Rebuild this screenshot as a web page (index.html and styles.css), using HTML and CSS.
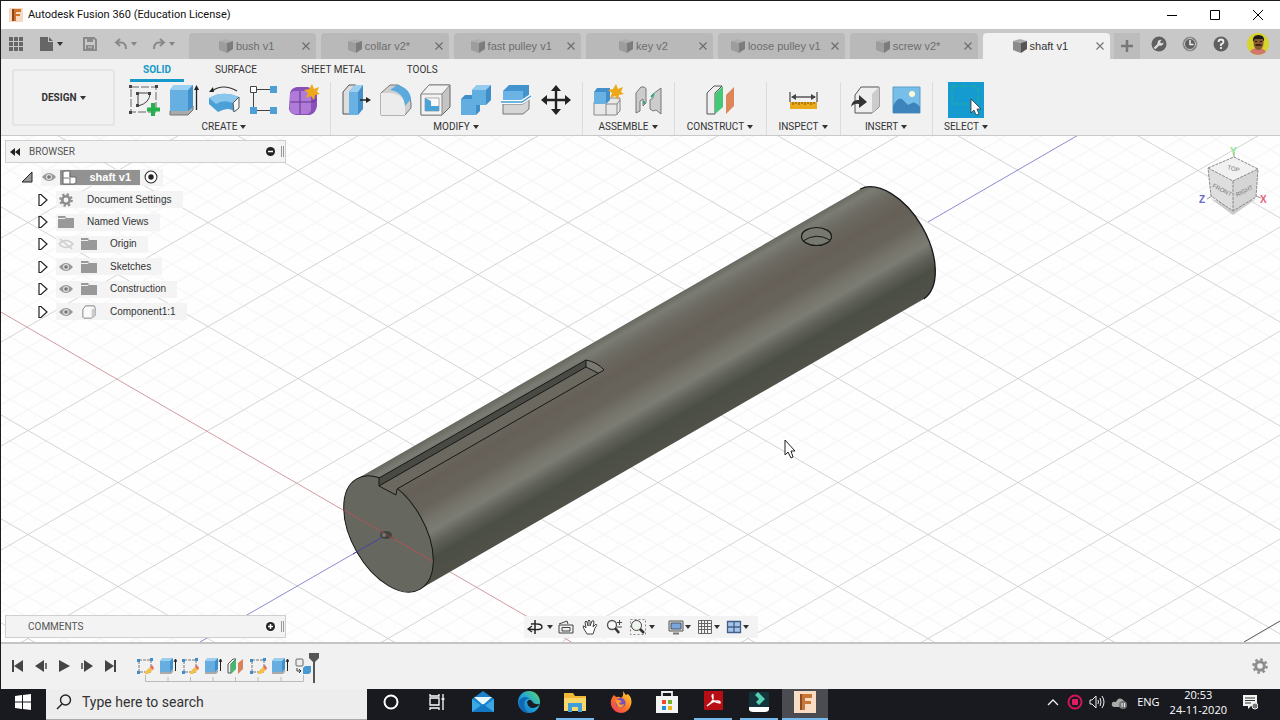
FILE: index.html
```html
<!DOCTYPE html>
<html lang="en">
<head>
<meta charset="utf-8">
<title>Autodesk Fusion 360 (Education License)</title>
<link rel="stylesheet" href="styles.css">
</head>
<body>
<svg class="defs" aria-hidden="true">
  <defs>
    <linearGradient id="edge" x1="0" y1="1" x2="1" y2="0"><stop offset="0" stop-color="#1565c0"/><stop offset=".5" stop-color="#1fa6d8"/><stop offset="1" stop-color="#63d86a"/></linearGradient>
    <linearGradient id="fire" x1="0" y1="1" x2="1" y2="0"><stop offset="0" stop-color="#f02f63"/><stop offset=".5" stop-color="#ff7a22"/><stop offset="1" stop-color="#ffe23c"/></linearGradient>
    <symbol id="cube" viewBox="0 0 16 16"><path d="M1 3 8 1 15 3 9 5Z" fill="#aaa"/><path d="M1 3 9 5V15L1 12Z" fill="#8c8c8c"/><path d="M9 5 15 3V11L9 15Z" fill="#555"/></symbol>
    <symbol id="close" viewBox="0 0 10 10"><path d="M1.500 1.500 8.500 8.500M8.500 1.500 1.500 8.500" stroke="currentColor" stroke-width="1.200" fill="none"/></symbol>
    <symbol id="folder" viewBox="0 0 16 14"><path d="M0 1H7L9 3H16V13H0Z" fill="#999"/><path d="M0 3.500H7L8.500 2" stroke="#eee" fill="none"/></symbol>
    <symbol id="eye" viewBox="0 0 16 12"><path d="M1 6Q8-2 15 6Q8 14 1 6Z" fill="#999"/><circle cx="8" cy="6" r="3" fill="#ddd"/><circle cx="8" cy="6" r="1.800" fill="#777"/></symbol>
    <symbol id="gear" viewBox="0 0 16 16"><circle cx="8" cy="8" r="4.300" fill="none" stroke="#8d8d8d" stroke-width="3"/><circle cx="8" cy="8" r="6.600" fill="none" stroke="#8d8d8d" stroke-width="2.400" stroke-dasharray="2.600 2.580"/></symbol>
    <symbol id="twist" viewBox="0 0 10 14"><path d="M1 1.500H3L9 7 3 12.500H1Z" fill="#fff" stroke="#222" stroke-width="1.200"/></symbol>
    <symbol id="sketch" viewBox="0 0 18 18"><path d="M3 3H15V15H3Z" fill="none" stroke="#777" stroke-dasharray="3 1"/><path d="M1 2h3v3H1zM14 1h3v3h-3zM1 14h3v3H1z" fill="#3c8dcc"/><path d="m9 15 5-5 3 3-5 4H9z" fill="#f3c04a"/><path d="m14 10 2-2 2 3-1 2z" fill="#e26b64"/></symbol>
    <symbol id="extrude" viewBox="0 0 18 18"><path d="M1 14H12L14 12V15L12 17H1Z" fill="#aaa"/><path d="M1 4 4 1H14V12L11 15H1Z" fill="#3f90ca"/><path d="M1 4H11V15H1Z" fill="#67aee0"/><path d="M1 4 4 1H14L11 4Z" fill="#9bcff0"/><path d="M16.500 14V3M15 5l1.500-3L18 5" stroke="#222" fill="none"/></symbol>
    <symbol id="planes" viewBox="0 0 18 18"><path d="M2 7 7 2H10L5 7V16H2Z" fill="#eee" stroke="#555"/><path d="M5 7 10 2V12L5 17Z" fill="#43b96d"/><path d="M12 6 17 2V12L12 17Z" fill="#d98259"/></symbol>
  </defs>
</svg>

<div class="app">
  <header class="titlebar">
    <svg class="logo" viewBox="0 0 14 14"><path d="M0 0H14V14H0Z" fill="#f6d9c0"/><path d="M3 1H12V4H7V6H11V8H7V13H3Z" fill="#d0712c"/><path d="M3 1H5V13H3Z" fill="#8f421c"/></svg>
    <h1>Autodesk Fusion 360 (Education License)</h1>
    <div class="window-controls">
      <button aria-label="Minimize"><svg viewBox="0 0 10 10"><path d="M0 5.500H10" stroke="#000"/></svg></button>
      <button aria-label="Maximize"><svg viewBox="0 0 10 10"><path d="M.5.5H9.500V9.500H.5Z" fill="none" stroke="#000"/></svg></button>
      <button aria-label="Close"><svg viewBox="0 0 10 10"><path d="M0 0 10 10M10 0 0 10" stroke="#000"/></svg></button>
    </div>
  </header>

  <div class="docbar">
    <div class="quick">
      <button aria-label="Data panel"><svg width="14" height="14" viewBox="0 0 14 14"><path d="M0 0h4v4H0zM5 0h4v4H5zM10 0h4v4h-4zM0 5h4v4H0zM5 5h4v4H5zM10 5h4v4h-4zM0 10h4v4H0zM5 10h4v4H5zM10 10h4v4h-4z" fill="#666"/></svg></button>
      <button class="caret wide" aria-label="File"><svg width="14" height="16" viewBox="0 0 14 16"><path d="M0 1H8V6H13V15H0ZM9 1 13 5H9Z" fill="#666"/></svg></button>
      <button class="save" aria-label="Save"><svg width="14" height="14" viewBox="0 0 14 14"><path d="M1 1H11L13 3V13H1Z" fill="none" stroke="#8a8a8a" stroke-width="2"/><path d="M4 1h6v4H4zM3 8h8v5H3z" fill="#8a8a8a"/><path d="M5 10h4" stroke="#ccc"/></svg></button>
      <button class="caret soft wide" aria-label="Undo"><svg width="14" height="14" viewBox="0 0 14 14"><path d="M6 2 2 5.500 6 9M2 5.500H7Q12 5.500 12 12" fill="none" stroke="#8a8a8a" stroke-width="2"/></svg></button>
      <button class="caret soft wide" aria-label="Redo"><svg width="14" height="14" viewBox="0 0 14 14"><path d="M8 2 12 5.500 8 9M12 5.500H7Q2 5.500 2 12" fill="none" stroke="#8a8a8a" stroke-width="2"/></svg></button>
    </div>
    <nav class="tabs" aria-label="Documents">
      <div class="tab"><button class="name"><svg><use href="#cube"/></svg>bush v1</button><button class="x" aria-label="Close bush"><svg><use href="#close"/></svg></button></div>
      <div class="tab"><button class="name"><svg><use href="#cube"/></svg>collar v2*</button><button class="x" aria-label="Close collar"><svg><use href="#close"/></svg></button></div>
      <div class="tab"><button class="name"><svg><use href="#cube"/></svg>fast pulley v1</button><button class="x" aria-label="Close fast pulley"><svg><use href="#close"/></svg></button></div>
      <div class="tab"><button class="name"><svg><use href="#cube"/></svg>key v2</button><button class="x" aria-label="Close key"><svg><use href="#close"/></svg></button></div>
      <div class="tab"><button class="name"><svg><use href="#cube"/></svg>loose pulley v1</button><button class="x" aria-label="Close loose pulley"><svg><use href="#close"/></svg></button></div>
      <div class="tab"><button class="name"><svg><use href="#cube"/></svg>screw v2*</button><button class="x" aria-label="Close screw"><svg><use href="#close"/></svg></button></div>
      <div class="tab active"><button class="name"><svg><use href="#cube"/></svg>shaft v1</button><button class="x" aria-label="Close shaft"><svg><use href="#close"/></svg></button></div>
    </nav>
    <button class="new" aria-label="New design"><svg width="12" height="12" viewBox="0 0 12 12"><path d="M6 0V12M0 6H12" stroke="#777" stroke-width="2.500"/></svg></button>
    <div class="account">
      <button aria-label="Extensions"><svg viewBox="0 0 16 16"><circle cx="8" cy="8" r="7.500" fill="#606060"/><path d="m3.500 12.500 5-5" stroke="#ddd" stroke-width="2.400"/><path d="M10.500 4A3 3 0 1 0 12.500 6.500L10.500 7.500 9 6Z" fill="#ddd"/></svg></button>
      <button aria-label="Job status"><svg viewBox="0 0 16 16"><circle cx="8" cy="8" r="7" fill="#606060" stroke="#999"/><circle cx="8" cy="8" r="5.500" fill="none" stroke="#ccc"/><path d="M8 4V8.500H11.500" stroke="#eee" stroke-width="1.500" fill="none"/></svg></button>
      <button aria-label="Help"><svg viewBox="0 0 16 16"><circle cx="8" cy="8" r="7.500" fill="#606060"/><path d="M5.500 6Q5.500 3.500 8 3.500T10.500 6Q10.500 7.500 8 8.300V10M8 11V13" stroke="#eee" stroke-width="1.800" fill="none"/></svg></button>
      <button class="avatar" aria-label="Profile"><svg viewBox="0 0 22 22"><circle cx="11" cy="11" r="11" fill="#d6d32c"/><path d="M3 19Q5 15 11 15T19 19Q11 25 3 19Z" fill="#d0786b"/><ellipse cx="11.500" cy="10" rx="5" ry="7" fill="#8a5733"/><path d="M6 9Q5 2 11.500 2T17 9L15.500 6H8Z" fill="#1d1a18"/><path d="M8.500 12H14.500" stroke="#21160e" stroke-width="1.500"/><path d="M8 8.500h2M13 8.500h2" stroke="#21160e"/></svg></button>
    </div>
  </div>

  <div class="ribbon">
    <button class="workspace caret">DESIGN</button>
    <div class="ribbon-main">
      <nav class="modes" aria-label="Toolbar tabs">
        <button class="on">SOLID</button><button>SURFACE</button><button>SHEET METAL</button><button>TOOLS</button>
      </nav>
      <div class="groups">
        <section class="group first">
          <div class="tools">
            <button aria-label="Create Sketch"><svg viewBox="0 0 32 32"><path d="M3 3H28V28H3Z" fill="none" stroke="#666" stroke-dasharray="8 2"/><path d="M1 1h3v3H1zM27 1h3v3h-3zM1 27h3v3H1zM8 8h3v3H8zM20 8h3v3h-3zM8 20h3v3H8z" fill="#444"/><path d="M10 10V21M10 9H22Q22 19 10 22" fill="none" stroke="#444"/><path d="M25 19V32M19 25.500H32" stroke="#23b14d" stroke-width="4"/></svg></button>
            <button aria-label="Extrude"><svg viewBox="0 0 32 32"><path d="M2 27 6 25 25 22V26L20 31H2Z" fill="#aaa" stroke="#777"/><path d="M2 6 6 1H25V23L20 27H2Z" fill="#3f91cd"/><path d="M2 6H20V27H2Z" fill="#65afe1"/><path d="M2 6 6 1H25L20 6Z" fill="#9ad0f1"/><path d="M28.500 26V4" stroke="#222" stroke-width="1.300"/><path d="m26 6 2.500-5L31 6Z" fill="#222"/></svg></button>
            <button aria-label="Revolve"><svg viewBox="0 0 32 32"><path d="M1 14Q15 6 31 13V24L26 28Q22 22 10 28L1 20Z" fill="#4ba0d8"/><path d="M1 14Q15 6 31 13L25 19Q15 15 8 20Z" fill="#8ac7ec"/><path d="M25 19 31 13V24L26 28Z" fill="#f6f6f6" stroke="#555"/><path d="M4 7Q15-1 29 7" fill="none" stroke="#333" stroke-width="1.200"/><path d="m1 8 4-5 1 5Z" fill="#222"/></svg></button>
            <button aria-label="Pattern"><svg viewBox="0 0 32 32"><path d="M9 5.500H24M5.500 9V24M9 26.500H24" stroke="#444"/><path d="M2.500 2.500h6v6h-6z" fill="#fff" stroke="#444"/><path d="M22 2h7v7h-7zM2 23h7v7H2zM22 23h7v7h-7z" fill="#4e9fd6"/></svg></button>
            <button aria-label="Create Form"><svg viewBox="0 0 32 32"><path d="M2 9Q3 4 9 3H20Q25 5 29 10V22Q28 29 22 31H8Q2 30 1 25Z" fill="#8950b8"/><path d="M2 10Q3 7 7 7H19Q23 8 23 12V26Q22 30 18 30H6Q2 29 2 25Z" fill="#b07ad9"/><path d="M12 7V30M2 18H23Q28 17 29 15" fill="none" stroke="#65348e"/><path d="m24 0 2 5 5-2-2 5 3 2-5 1-1 5-3-4-5 2 2-5-4-3 5-1Z" fill="#eda81c"/></svg></button>
          </div>
          <button class="caret label">CREATE</button>
        </section>
        <section class="group">
          <div class="tools">
            <button aria-label="Press Pull"><svg viewBox="0 0 32 32"><path d="M3 8 9 1H16V25L12 30H3Z" fill="#ddd" stroke="#555"/><path d="M9 8 15 1H23V25L18 31H9Z" fill="#458fc8"/><path d="M9 8H18V31H9Z" fill="#69b1e2"/><path d="M9 8 15 1H23L18 8Z" fill="#9bcff0"/><path d="M20 16H28" stroke="#222" stroke-width="1.500"/><path d="m26 13 5 3-5 3Z" fill="#222"/></svg></button>
            <button aria-label="Fillet"><svg viewBox="0 0 32 32"><path d="M1 9 10 1H18Q30 6 31 19V24L25 31H1Z" fill="#cfcfcf" stroke="#777"/><path d="M1 9H10Q24 10 25 22V31H1Z" fill="#ececec"/><path d="M10 6 17 1Q30 4 31 15L25 22Q24 8 10 6Z" fill="#5aaadd"/></svg></button>
            <button aria-label="Shell"><svg viewBox="0 0 32 32"><path d="M1 10 9 1H30V23L22 31H1Z" fill="#c4c4c4" stroke="#666"/><path d="M1 10H22V31H1ZM1 10 9 1H30L22 10" fill="#f2f2f2" stroke="#888"/><path d="M5 14H19V27H5Z" fill="#fafafa" stroke="#aaa"/><path d="M5 14 11 17V22L19 22V27H5Z" fill="#4aa2d9"/></svg></button>
            <button aria-label="Combine"><svg viewBox="0 0 32 32"><path d="M1 15 5 11H12V6L17 1H31V16L26 21H20V27L16 31H1Z" fill="#3e8ec8"/><path d="M1 15H12V6H26V21H16V31H1Z" fill="#63aee0"/><path d="m12 6 5-5h14l-5 5Z" fill="#94cbef"/></svg></button>
            <button aria-label="Split Body"><svg viewBox="0 0 32 32"><path d="M3 20H23L29 15V25L23 30H3Z" fill="#d6d6d6" stroke="#777"/><path d="M3 7 9 1H29V12L23 16H3Z" fill="#4393ce"/><path d="M3 7H23V16H3Z" fill="#6ab3e4"/><path d="M1 18H22L31 12" fill="none" stroke="#fff" stroke-width="4"/><path d="M1 18H22L31 12" fill="none" stroke="#459cd2" stroke-width="1.500"/></svg></button>
            <button aria-label="Move"><svg viewBox="0 0 32 32"><path d="M16 5V27M5 16H27" stroke="#222" stroke-width="2.400"/><path d="m11 7 5-6 5 6ZM11 25l5 6 5-6ZM7 11l-6 5 6 5ZM25 11l6 5-6 5Z" fill="#222"/></svg></button>
          </div>
          <button class="caret label">MODIFY</button>
        </section>
        <section class="group">
          <div class="tools">
            <button aria-label="New Component"><svg viewBox="0 0 32 32"><path d="M2 18H14L18 14H28V27L24 31H2Z" fill="#e8e8e8" stroke="#888"/><path d="M2 8 5 4H18V16L14 20H2Z" fill="#4190cb"/><path d="M2 8H14V20H2Z" fill="#68b1e2"/><path d="M14 20H25V31M14 20V31M25 20l3-4" fill="none" stroke="#888"/><path d="m24 0 2 5 5-2-2 5 3 2-5 1-1 5-3-4-5 2 2-5-4-3 5-1Z" fill="#eda81c"/></svg></button>
            <button aria-label="Joint"><svg viewBox="0 0 32 32"><path d="M4 9 9 3H12Q15 4 14 7V19L11 22V15L8 17V27L4 29Z" fill="#ccc" stroke="#777"/><path d="M29 4 21 10V14L18 16V25L21 27 24 26 29 30Z" fill="#ccc" stroke="#777"/><path d="M12 17V20M19 13 22 10" stroke="#35a887" stroke-width="2"/></svg></button>
          </div>
          <button class="caret label">ASSEMBLE</button>
        </section>
        <section class="group">
          <div class="tools single">
            <button aria-label="Offset Plane"><svg viewBox="0 0 32 32"><path d="M3 9 10 2H18L11 9V30H3Z" fill="#eee" stroke="#555"/><path d="M11 10 19 2V23L11 30Z" fill="#45c875"/><path d="M22 11 30 3V22L22 30Z" fill="#dc8659"/></svg></button>
          </div>
          <button class="caret label">CONSTRUCT</button>
        </section>
        <section class="group">
          <div class="tools narrow">
            <button aria-label="Measure"><svg viewBox="0 0 32 32"><path d="M3 8V18M30 8V18M5 13H28" stroke="#555" stroke-width="1.300"/><path d="m4 13 5-3v6ZM29 13l-5-3v6Z" fill="#444"/><path d="M3 18H30V25H3Z" fill="#eba91c"/><path d="M6 18v3m3-3v2m3-2v3m3-3v2m3-2v3m3-3v2m3-2v3m3-3v2" stroke="#795006"/></svg></button>
          </div>
          <button class="caret label">INSPECT</button>
        </section>
        <section class="group">
          <div class="tools">
            <button aria-label="Insert Derive"><svg viewBox="0 0 32 32"><path d="M5 11 11 3H29V23L22 29H5Z" fill="#eee" stroke="#555"/><path d="M22 10 29 3V23L22 29Z" fill="#ccc"/><path d="M1 23Q2 15 9 16V11L17 18 9 24V20Q4 19 1 23Z" fill="#333"/></svg></button>
            <button aria-label="Insert Image"><svg viewBox="0 0 32 32"><path d="M3 3H30V29H3Z" fill="#77bee9" stroke="#619dc2"/><path d="M3 22Q9 10 14 17L18 21 22 19Q25 17 30 23V29H3Z" fill="#3d84bc"/><circle cx="22" cy="10" r="3" fill="#fffbd4"/></svg></button>
          </div>
          <button class="caret label">INSERT</button>
        </section>
        <section class="group last">
          <div class="tools slim">
            <button class="picked" aria-label="Select"><svg viewBox="0 0 36 36"><path d="M4 4H30V22H4Z" fill="none" stroke="#23b28e" stroke-dasharray="6 3"/><path d="M23 17V31L26 28 28 33 31 32 29 27H33Z" fill="#fff" stroke="#333" stroke-width=".8"/></svg></button>
          </div>
          <button class="caret label">SELECT</button>
        </section>
      </div>
    </div>
  </div>

  <main class="viewport">
    <svg class="scene" viewBox="1 136 1279 506" preserveAspectRatio="xMidYMid slice" role="img" aria-label="Shaft model">
      <defs>
        <pattern id="grid" patternUnits="userSpaceOnUse" x="928" y="326.500" width="180" height="104">
          <g fill="none" stroke="#f2f2f2">
            <path d="M0 20.800 144 104M0 41.600 108 104M0 62.400 72 104M0 83.200 36 104M36 0 180 83.200M72 0 180 62.400M108 0 180 41.600M144 0 180 20.800"/>
            <path d="M0 83.200 144 0M0 62.400 108 0M0 41.600 72 0M0 20.800 36 0M36 104 180 20.800M72 104 180 41.600M108 104 180 62.400M144 104 180 83.200"/>
          </g>
        </pattern>
        <linearGradient id="steel" gradientUnits="userSpaceOnUse" x1="356.700" y1="479" x2="420.300" y2="589">
          <stop offset="0" stop-color="#66685f"/><stop offset=".06" stop-color="#7b7c74"/><stop offset=".16" stop-color="#6c6a62"/><stop offset=".3" stop-color="#655f57"/><stop offset=".46" stop-color="#68645c"/><stop offset=".58" stop-color="#77766d"/><stop offset=".65" stop-color="#7b7c73"/><stop offset=".74" stop-color="#60625a"/><stop offset=".84" stop-color="#4b4e45"/><stop offset="1" stop-color="#50524a"/>
        </linearGradient>
      </defs>
      <path d="M0 136H1280V642H0Z" fill="#fefefe"/>
      <path d="M0 136H1280V642H0Z" fill="url(#grid)"/>
      <path d="M0-521.700l1280 739.600M0-417.700l1280 739.600M0-313.700l1280 739.600M0-209.700l1280 739.600M0-105.700l1280 739.600M0-1.700l1280 739.600M0 102.300l1280 739.600M0 206.300l1280 739.600M0 414.300l1280 739.600M0 518.300l1280 739.600M0 622.300l1280 739.600M0 238.700l1280-739.600M0 342.700l1280-739.600M0 446.700l1280-739.600M0 550.700l1280-739.600M0 654.700l1280-739.600M0 862.700l1280-739.600M0 966.700l1280-739.600M0 1070.700l1280-739.600M0 1174.700l1280-739.600M0 1278.700l1280-739.600" fill="none" stroke="#cfcfcf" stroke-width=".9"/>
      <path d="M0 311.500 578 646" stroke="#d39aa2"/>
      <path d="M200 642 386 535M928 222 1080 134" stroke="#8b8bd0"/>
      <path d="M1244 642 1280 621" stroke="#555"/>
      <path d="M356.700 479 860.200 189A63.600 36.400 60 0 1 923.800 299L420.300 589Z" fill="url(#steel)"/>
      <path d="M860.200 189A63.600 36.400 60 0 1 923.800 299" fill="none" stroke="#171717" stroke-width="1.300"/>
      <ellipse cx="388.500" cy="534" rx="63.600" ry="36.400" transform="rotate(60 388.500 534)" fill="#66685f" stroke="#171717"/>
      <path d="M379 478 397 489 396 495 379 486Z" fill="#6b6860"/>
      <path d="M379 478 586 360 604 370 397 489 396 495 379 486Z" fill="#6b6860"/>
      <path d="M379 478 586 360V367L379 486Z" fill="#484a43"/>
      <path d="M586 360Q597 362 604 370L598 373 586 367Z" fill="#797970"/>
      <path d="M379 478 586 360Q597 362 604 370L397 489 396 495 379 486ZM379 486 586 367V360M586 367 598 373" fill="none" stroke="#181818"/>
      <ellipse cx="816.500" cy="236.500" rx="15" ry="9" fill="#77786e" stroke="#181818" stroke-width="1.200"/>
      <path d="M803 241Q816 232 830 240" fill="none" stroke="#181818"/>
      <path d="M344 510 433 561.500" stroke="#b05357"/>
      <path d="M353 554 386 535" stroke="#4444a3"/>
      <ellipse cx="386" cy="535" rx="6" ry="4" fill="#42443f"/><path d="M380 531l14 8" stroke="#8d4146"/><circle cx="384" cy="535" r="2" fill="#777"/>
      <g class="compass">
        <path d="M1211 199 1233 215 1256 199 1233 205Z" fill="#ccc"/>
        <path d="M1208 168 1234 157 1258 169 1233 181Z" fill="#f1f1f1"/><path d="M1208 168 1233 181V211L1211 196Z" fill="#dedede"/><path d="M1233 181 1258 169 1256 197 1233 211Z" fill="#d5d5d5"/>
        <path d="M1208 168 1233 181V211M1233 181 1258 169M1208 168 1234 157 1258 169 1256 197 1233 211 1211 196Z" fill="none" stroke="#888" stroke-dasharray="3 1"/>
        <path d="M1234 152V157M1207 199 1212 196M1256 196 1261 198" stroke="#999"/>
        <text x="1227" y="169" transform="rotate(15 1227 169)">TOP</text><text x="1212" y="187" transform="rotate(27 1212 187)">FRONT</text><text x="1237" y="197" transform="rotate(-27 1237 197)">RIGHT</text>
        <text class="axis y" x="1230" y="155">Y</text><text class="axis z" x="1199" y="203">Z</text><text class="axis x" x="1260" y="203">X</text>
      </g>
      <path d="M785 440V455L788 452 791 458 793 457 791 451H795Z" fill="#fff" stroke="#222"/>
    </svg>

    <aside class="browser">
      <header class="panel"><button aria-label="Collapse"><svg width="10" height="8" viewBox="0 0 10 8"><path d="M5 0V8L0 4ZM10 0V8L5 4Z" fill="#222"/></svg></button><h2>BROWSER</h2><button aria-label="Hide browser"><svg width="9" height="9" viewBox="0 0 9 9"><circle cx="4.500" cy="4.500" r="4.500" fill="#222"/><path d="M2 4.500H7" stroke="#fff" stroke-width="1.500"/></svg></button><i class="grip"></i></header>
      <ul class="tree">
        <li class="root"><button class="twist" aria-label="Collapse shaft"><svg viewBox="0 0 12 12"><path d="M1 11 11 1V11Z" fill="#999" stroke="#222"/></svg></button><span class="item"><svg><use href="#eye"/></svg><b><svg width="16" height="15" viewBox="0 0 16 15"><path d="M1 2 3 1H8V7H14V13L12 14H1Z" fill="#fff" stroke="#666"/><path d="M1 8H8V14M8 7V3" fill="none" stroke="#777"/></svg>shaft v1</b><svg viewBox="0 0 13 13"><circle cx="6.500" cy="6.500" r="5.500" fill="#fff" stroke="#333"/><circle cx="6.500" cy="6.500" r="2.500" fill="#222"/></svg></span></li>
        <li><button class="twist" aria-label="Expand"><svg><use href="#twist"/></svg></button><span class="item"><svg><use href="#gear"/></svg><span>Document Settings</span></span></li>
        <li><button class="twist" aria-label="Expand"><svg><use href="#twist"/></svg></button><span class="item"><svg><use href="#folder"/></svg><span>Named Views</span></span></li>
        <li><button class="twist" aria-label="Expand"><svg><use href="#twist"/></svg></button><span class="item"><svg class="faint" viewBox="0 0 16 12"><path d="M1 6Q8-1 15 6Q8 13 1 6M2 1 14 11" fill="none" stroke="#aaa" stroke-width="1.500"/></svg><svg><use href="#folder"/></svg><span>Origin</span></span></li>
        <li><button class="twist" aria-label="Expand"><svg><use href="#twist"/></svg></button><span class="item"><svg><use href="#eye"/></svg><svg><use href="#folder"/></svg><span>Sketches</span></span></li>
        <li><button class="twist" aria-label="Expand"><svg><use href="#twist"/></svg></button><span class="item"><svg><use href="#eye"/></svg><svg><use href="#folder"/></svg><span>Construction</span></span></li>
        <li><button class="twist" aria-label="Expand"><svg><use href="#twist"/></svg></button><span class="item"><svg><use href="#eye"/></svg><svg viewBox="0 0 16 16"><path d="M1 5 4 1H14L15 3V12L11 15H2L1 14Z" fill="#fafafa" stroke="#777"/><path d="M11 5 15 3V12L11 15Z" fill="#ccc"/></svg><span>Component1:1</span></span></li>
      </ul>
    </aside>

    <div class="panel comments"><h2>COMMENTS</h2><button aria-label="Add comment"><svg width="9" height="9" viewBox="0 0 9 9"><circle cx="4.500" cy="4.500" r="4.500" fill="#222"/><path d="M2 4.500H7M4.500 2V7" stroke="#fff" stroke-width="1.500"/></svg></button><i class="grip"></i></div>

    <div class="navbar">
      <button class="caret" aria-label="Orbit"><svg viewBox="0 0 16 16"><path d="M8 1V15" stroke="#555" stroke-width="2"/><path d="M4 5Q15 4 15 8T2 10M5 7 1 10 5 13" fill="none" stroke="#222" stroke-width="1.300"/></svg></button>
      <button aria-label="Look At"><svg viewBox="0 0 16 16"><path d="M1 6H15V14H1ZM1 5 9 2 10 5M4 8.500H12V12H4Z" fill="#eee" stroke="#444"/></svg></button>
      <button aria-label="Pan"><svg viewBox="0 0 16 16"><path d="M5 15Q1 9 1 7 2 6 4 9L3 3Q4 1 5 3L6 7V2Q7 0 8 2V7L10 2Q12 1 12 3L11 8 14 5Q16 6 13 9L11 15Z" fill="#fff" stroke="#444"/></svg></button>
      <button aria-label="Zoom"><svg viewBox="0 0 16 16"><circle cx="6" cy="6" r="4.500" fill="#f9f9f9" stroke="#555" stroke-width="1.300"/><path d="m9 9 4 5" stroke="#333" stroke-width="2.500"/><path d="M13.500 1V6M11 3.500H16M11 8H16" stroke="#444"/></svg></button>
      <button class="caret" aria-label="Fit"><svg viewBox="0 0 16 16"><path d="M.5.500H15.500V15.500H.5Z" fill="none" stroke="#888" stroke-dasharray="2 2"/><circle cx="6.500" cy="6.500" r="5" fill="#eef5ee" stroke="#444"/><path d="m10 10 4 4" stroke="#333" stroke-width="2.500"/></svg></button>
      <button class="caret" aria-label="Display Settings"><svg viewBox="0 0 16 16"><path d="M1 2H15V12H1Z" fill="#ddd" stroke="#555"/><path d="M3 4H13V10H3Z" fill="#78a6dd" stroke="#456"/><path d="M5 14.500H11" stroke="#777" stroke-width="2"/></svg></button>
      <button class="caret" aria-label="Grid"><svg viewBox="0 0 16 16"><path d="M1.500 1.500H14.500V14.500H1.500ZM4.500 1V15M7.500 1V15M10.500 1V15M1 4.500H15M1 7.500H15M1 10.500H15" fill="none" stroke="#666"/></svg></button>
      <button class="caret" aria-label="Viewports"><svg viewBox="0 0 16 16"><path d="M1.500 2.500H14.500V13.500H1.500ZM8 2V14M1 8H15" fill="#a9c4e4" stroke="#3f608c" stroke-width="1.300"/></svg></button>
    </div>
  </main>

  <footer class="timeline">
    <div class="play">
      <button aria-label="Start"><svg viewBox="0 0 14 14"><path d="M2 1V13" stroke="#444" stroke-width="2"/><path d="M12 1V13L3 7Z" fill="#444"/></svg></button>
      <button aria-label="Back"><svg viewBox="0 0 14 14"><path d="M10 1V13L1 7Z" fill="#444"/><path d="M12 4V10" stroke="#444" stroke-width="1.500"/></svg></button>
      <button aria-label="Play"><svg viewBox="0 0 14 14"><path d="M2 1V13L13 7Z" fill="#444"/></svg></button>
      <button aria-label="Forward"><svg viewBox="0 0 14 14"><path d="M4 1V13L13 7Z" fill="#444"/><path d="M2 4V10" stroke="#444" stroke-width="1.500"/></svg></button>
      <button aria-label="End"><svg viewBox="0 0 14 14"><path d="M2 1V13L11 7Z" fill="#444"/><path d="M12 1V13" stroke="#444" stroke-width="2"/></svg></button>
    </div>
    <div class="history">
      <button aria-label="Sketch 1"><svg><use href="#sketch"/></svg></button><button aria-label="Extrude 1"><svg><use href="#extrude"/></svg></button><button aria-label="Sketch 2"><svg><use href="#sketch"/></svg></button><button aria-label="Extrude 2"><svg><use href="#extrude"/></svg></button><button aria-label="Plane 1"><svg><use href="#planes"/></svg></button><button aria-label="Sketch 3"><svg><use href="#sketch"/></svg></button><button aria-label="Extrude 3"><svg><use href="#extrude"/></svg></button><button aria-label="Component"><svg viewBox="0 0 18 18"><rect x="2" y="2" width="7" height="7" rx="1" fill="#eee" stroke="#666"/><path d="M3 11V14H7M5 12l2 2-2 2" fill="none" stroke="#333"/><path d="M9 11 11 9H17V15L15 17H9Z" fill="#4799d1"/></svg></button>
      <svg class="ticks" viewBox="0 0 159 7" preserveAspectRatio="none"><path d="M.5 0V6.500H158.500V0M23 2V6M45.500 2V6M68 2V6M90.500 2V6M113 2V6M136 2V6" fill="none" stroke="#bbb"/></svg>
      <svg class="marker" viewBox="0 0 12 30"><path d="M1 0H11V5L7 9V30H5V9L1 5Z" fill="#555"/></svg>
    </div>
    <button class="settings" aria-label="Settings"><svg><use href="#gear"/></svg></button>
  </footer>
</div>

<div class="taskbar">
  <button class="start" aria-label="Start menu"><svg width="16" height="16" viewBox="0 0 16 16"><path d="M0 2 7 1V7.500H0ZM8 1 16 0V7.500H8ZM0 8.500H7V15L0 14ZM8 8.500H16V16L8 15Z" fill="#fff"/></svg></button>
  <label class="search"><svg width="16" height="16" viewBox="0 0 16 16"><circle cx="9.500" cy="6" r="5" fill="none" stroke="#222" stroke-width="1.400"/><path d="m6 10-5 5" stroke="#222" stroke-width="1.500"/></svg><input type="search" placeholder="Type here to search" aria-label="Type here to search"></label>
  <div class="apps">
    <button aria-label="Cortana"><svg viewBox="0 0 24 24"><circle cx="12" cy="12" r="6.500" fill="none" stroke="#fff" stroke-width="2"/></svg></button>
    <button aria-label="Task View"><svg viewBox="0 0 24 24"><path d="M5 4V6H14V4M5 20V18H14V20M5 8H14V15H5ZM18 4V20M16.500 9H19.500" fill="none" stroke="#fff" stroke-width="1.300"/></svg></button>
    <button aria-label="Mail"><svg viewBox="0 0 24 24"><path d="M1 9 12 1 23 9V22H1Z" fill="#1b82c9"/><path d="M3 7H21L12 15Z" fill="#e9f7ff"/><path d="M1 9 12 17 23 9V22H1Z" fill="#39a8e5"/><path d="m1 22 11-8 11 8Z" fill="#1477c2"/></svg></button>
    <button aria-label="Edge"><svg viewBox="0 0 24 24"><circle cx="12" cy="12" r="11" fill="url(#edge)"/><path d="M10 12Q12 8 15 11 17 15 23 14 21 17 16 18 11 18 10 12Z" fill="#1b1d24"/><path d="M2 11Q7 4 13 9 8 8 7 14 7 20 12 23 2 21 2 11Z" fill="#1267b5"/></svg></button>
    <button class="running" aria-label="File Explorer"><svg viewBox="0 0 24 24"><path d="M1 3H10L12 6H23V21H1Z" fill="#efb935"/><path d="M1 8H23V21H1Z" fill="#fbd669"/><path d="M5 22V13H19V22H15V17H9V22Z" fill="#3e9fdb"/></svg></button>
    <button aria-label="Firefox"><svg viewBox="0 0 24 24"><path d="M14 1Q16 4 17 5L19 4Q24 9 22 15 19 23 12 23 4 22 2 15 1 9 5 5L7 7Q11 6 12 8 15 6 14 1Z" fill="url(#fire)"/><circle cx="11.500" cy="13" r="5" fill="#7650c3"/><path d="M6 10Q11 9 13 12L10 13Q11 16 15 14 14 19 9 17Z" fill="#ff9b27"/></svg></button>
    <button aria-label="Microsoft Store"><svg viewBox="0 0 24 24"><path d="M7 6V2H17V6" fill="none" stroke="#eee" stroke-width="1.800"/><path d="M1 6H23V23H1Z" fill="#f4f4f4"/><path d="M7 10h4v4H7z" fill="#e74c2b"/><path d="M13 10h4v4h-4z" fill="#70b62c"/><path d="M7 16h4v4H7z" fill="#1d91df"/><path d="M13 16h4v4h-4z" fill="#f2b319"/></svg></button>
    <button class="running" aria-label="Acrobat"><svg viewBox="0 0 24 24"><path d="M3 1H22V20H3Z" fill="#b90d16"/><path d="M6 16Q13 12 12 6 12 3 11 6 12 13 19 13 20 11 16 11 11 11 6 16Z" fill="none" stroke="#fff" stroke-width="1.300"/></svg></button>
    <button class="running" aria-label="Filmora"><svg viewBox="0 0 24 24"><path d="M2 2H22V20H2Z" fill="#12333c"/><path d="m8 5 3-3 7 7-6 6-3-3 3-3Z" fill="#56d1b0"/><path d="M2 17H22V20Q21 22 18 22H6Q3 22 2 20Z" fill="#fff"/></svg></button>
    <button class="running current" aria-label="Fusion 360"><svg viewBox="0 0 24 24"><path d="M1 1H23V23H1Z" fill="#f8dcc4"/><path d="M7 4H19V8H12V11H18V14H12V20H7Z" fill="#c97737"/><path d="M7 4H9V20H7Z" fill="#8d4b25"/></svg></button>
  </div>
  <div class="tray">
    <button aria-label="Hidden icons"><svg viewBox="0 0 16 16"><path d="m3 11 5-5 5 5" fill="none" stroke="#eee" stroke-width="1.300"/></svg></button>
    <button aria-label="Recorder"><svg viewBox="0 0 16 16"><circle cx="8" cy="8" r="6.500" fill="none" stroke="#d4145a" stroke-width="2"/><rect x="5" y="5" width="6" height="6" rx="1" fill="#e01c62"/></svg></button>
    <button aria-label="Volume"><svg viewBox="0 0 16 16"><path d="M1 6H3L7 2V14L3 10H1ZM9 6Q10 8 9 10M11 4Q13 8 11 12M13 2Q17 8 13 14" fill="none" stroke="#eee"/></svg></button>
    <button aria-label="OneDrive"><svg viewBox="0 0 16 16"><path d="M3 13Q0 12 1 9 2 7 5 8 7 3 11 5L15 9V13Z" fill="#aaa"/><circle cx="12" cy="11" r="4" fill="#777"/><path d="M11 9V13M13.500 9V13" stroke="#eee"/></svg></button>
    <span>ENG</span>
    <time class="clock">20:53<br>24-11-2020</time>
    <button class="notes" aria-label="Notifications"><svg viewBox="0 0 16 16"><path d="M1 1H15V12H9L6 15V12H1Z" fill="#f2f2f2"/><path d="M3 4H13M3 6.500H13M3 9H9" stroke="#333"/><circle cx="13" cy="12" r="3" fill="#777" stroke="#eee"/></svg></button>
  </div>
</div>
</body>
</html>
```
FILE: styles.css
```css
* { box-sizing: border-box; }
body {
  margin: 0;
  height: 100vh;
  display: flex;
  flex-direction: column;
  overflow: hidden;
  font: 10px/16px "Liberation Sans", Arial, sans-serif;
  color: #333;
  background: #f1f1f1;
}
button {
  display: flex;
  align-items: center;
  justify-content: center;
  padding: 0;
  border: 0;
  background: none;
  color: inherit;
  font: inherit;
}
h1, h2, ul { margin: 0; padding: 0; font-weight: normal; }
svg { display: block; flex: none; }
.defs { position: absolute; width: 0; height: 0; }
.caret { gap: 3px; }
.caret::after {
  content: "";
  border: 3px solid transparent;
  border-top: 4px solid #333;
  border-bottom: 0;
}
.soft::after { border-top-color: #858585; }

.app {
  flex: 1;
  min-height: 0;
  display: flex;
  flex-direction: column;
  border-top: 1px solid #1c1c1c;
  border-left: 1px solid #1c1c1c;
}

/* Title bar */
.titlebar {
  display: flex;
  align-items: center;
  height: 28px;
  padding-left: 8px;
  background: #fff;
}
.logo { width: 14px; height: 14px; margin-right: 5px; }
.titlebar h1 { flex: 1; font: 11px/16px Roboto, sans-serif; color: #111; }
.window-controls { display: flex; padding-right: 1px; }
.window-controls button { width: 43px; height: 28px; }
.window-controls svg { width: 10px; height: 10px; }

/* Document tabs */
.docbar { display: flex; height: 30px; background: #c8c8c8; }
.quick { display: flex; align-items: center; width: 188px; padding-left: 7px; gap: 8px; }
.quick button { width: 16px; height: 24px; }
.quick .wide { width: 30px; }
.quick .wide:nth-child(2) { margin-left: 4px; }
.quick .save { margin: 0 4px 0 8px; }
.tabs { display: flex; flex: 0 1 921px; gap: 5px; padding-top: 4px; }
.tab {
  display: flex;
  flex: 1;
  min-width: 0;
  padding: 0 4px 0 3px;
  border-radius: 4px 4px 0 0;
  background: #b9b9b9;
  color: #6d6d6d;
  font-size: 11px;
}
.tab .name { flex: 1; gap: 2px; white-space: nowrap; }
.tab .name svg { width: 16px; height: 16px; opacity: .6; }
.tab .x { width: 12px; }
.tab .x svg { width: 10px; height: 10px; }
.tab.active { background: #f1f1f1; color: #333; }
.tab.active .x { color: #777; }
.tab.active .name svg { opacity: 1; }
.new { width: 26px; margin: 4px 0 0 4px; background: #bcbcbc; }
.account { display: flex; align-items: center; gap: 15px; margin-left: 11px; }
.account svg { width: 16px; height: 16px; }
.account .avatar svg { width: 22px; height: 22px; margin-left: 3px; }

/* Ribbon */
.ribbon {
  display: flex;
  height: 77px;
  padding-left: 11px;
  border-bottom: 1px solid #c9c9c9;
  background: #f1f1f1;
  font-family: Roboto, sans-serif;
}
.workspace {
  width: 103px;
  height: 57px;
  margin: 10px 9px 0 0;
  border: 2px solid #e4e4e4;
  border-radius: 3px;
  font-weight: bold;
}
.modes { display: flex; height: 23px; padding-left: 6px; gap: 30px; }
.modes button { padding: 1px 1px 0; border-bottom: 3px solid transparent; }
.modes .on { width: 54px; color: #1499c9; font-weight: bold; border-color: #1499c9; }
.modes button:nth-child(3) { margin-left: 12px; }
.modes button:nth-child(4) { margin-left: 9px; }
.groups { display: flex; }
.group { padding: 0 6px 0 5px; border-right: 1px solid #dcdcdc; }
.group.first { padding-left: 0; }
.group.last { border: 0; }
.tools { display: flex; height: 36px; }
.tools button { width: 40px; }
.tools svg { width: 32px; height: 32px; }
.single button { width: 80px; }
.narrow button { width: 62px; }
.slim button { width: 56px; }
.tools .picked svg { width: 36px; height: 36px; background: #169bd0; }
.label { width: 100%; height: 17px; padding-top: 1px; }

/* Model view */
.viewport { position: relative; flex: 1; min-height: 0; overflow: hidden; background: #fff; }
.scene { width: 100%; height: 100%; }
.compass text { font: 6px "Liberation Sans", sans-serif; fill: #777; }
.compass .axis { font: bold 10px "Liberation Sans", sans-serif; }
.compass .y { fill: #8ee58e; }
.compass .z { fill: #6c66d3; }
.compass .x { fill: #e5607e; }
.browser { position: absolute; top: 4px; left: 4px; width: 281px; }
.panel {
  display: flex;
  align-items: center;
  height: 23px;
  padding: 0 1px 0 4px;
  border: 1px solid #cfcfcf;
  background: #f3f3f3;
  color: #555;
  font-family: Roboto, sans-serif;
}
.panel h2 { flex: 1; padding-left: 9px; font-size: 10px; }
.grip { width: 3px; height: 11px; margin-left: 6px; border: solid #999; border-width: 0 1px; }
.comments { position: absolute; left: 4px; bottom: 4px; width: 281px; }
.comments h2 { padding-left: 18px; }
.tree {
  display: grid;
  grid-auto-rows: 1fr;
  height: 158px;
  padding-top: 1px;
  margin-top: 2px;
  padding-left: 33px;
  list-style: none;
}
.tree li { display: flex; align-items: center; gap: 8px; }
.tree .twist svg { width: 10px; height: 14px; }
.tree .root { margin-left: -17px; }
.item { display: flex; align-items: center; gap: 7px; height: 17px; padding: 0 11px 0 2px; background: rgba(243, 243, 243, .9); }
.item > svg { width: 16px; height: 14px; }
.item > span { padding-left: 6px; }
.item .faint { opacity: .5; }
.item b { display: flex; align-items: center; height: 15px; width: 80px; padding: 0 9px 0 2px; justify-content: space-between; background: #929292; color: #fff; font-size: 11px; }
.root .item { gap: 3px; padding: 0 4px 0 0; }
.tree .root .twist svg { width: 12px; height: 12px; }
.navbar {
  position: absolute;
  left: 50%;
  bottom: 4px;
  transform: translateX(-50%);
  display: flex;
  align-items: center;
  gap: 8px;
  height: 22px;
  padding: 0 9px 0 3px;
  background: #f3f3f3;
}
.navbar svg { width: 16px; height: 16px; }
.navbar .caret { gap: 1px; }
.navbar button:nth-child(5) { gap: 3px; margin-right: 5px; }
.navbar button:nth-child(1) { gap: 4px; margin-right: -3px; }
.navbar button:nth-child(n+7) { margin-left: -2px; }

/* Timeline */
.timeline {
  display: flex;
  align-items: center;
  height: 47px;
  padding: 0 12px 2px 8px;
  border-top: 2px solid #c4c4c4;
  background: #f1f1f1;
}
.play { display: flex; gap: 6px; width: 125px; }
.play button { width: 17px; }
.play svg { width: 14px; height: 14px; }
.history { position: relative; display: grid; grid-template-columns: repeat(8, 1fr); width: 180px; }
.history button svg { width: 18px; height: 18px; }
.history .ticks { position: absolute; left: 11px; top: 18px; width: 159px; height: 7px; }
.history .marker { position: absolute; right: -6px; top: -4px; width: 12px; height: 30px; }
.settings { margin-left: auto; }
.settings svg { width: 16px; height: 16px; }

/* Windows taskbar */
.taskbar {
  display: flex;
  height: 31px;
  overflow: hidden;
  background: #191a20;
  color: #fff;
  font-family: "Open Sans", sans-serif;
}
.start { width: 46px; height: 26px; }
.search { display: flex; align-items: center; width: 321px; padding: 0 10px 5px; gap: 10px; background: #ededed; border-bottom: 1px solid #aaa; }
.search input { flex: 1; min-width: 0; padding: 0; border: 0; outline: 0; background: none; font: 14px/20px Roboto, sans-serif; }
.search input::placeholder { color: #333; opacity: 1; }
.apps { display: flex; padding-left: 1px; }
.apps button { width: 46px; padding-bottom: 5px; }
.apps svg { width: 24px; height: 24px; }
.apps .running { background: linear-gradient(#76b9ed, #76b9ed) center bottom / 38px 2px no-repeat; }
.apps .current { background-color: #4b4c51; background-size: 46px 2px; }
.tray { display: flex; margin-left: auto; gap: 6px; padding-right: 22px; }
.tray button, .tray span { display: flex; align-items: center; height: 26px; }
.tray svg { width: 16px; height: 16px; }
.tray span { margin-left: 4px; font-size: 11px; }
.clock { align-self: flex-start; margin: -2px 9px 0 4px; text-align: center; font-size: 11px; line-height: 15px; }
```
